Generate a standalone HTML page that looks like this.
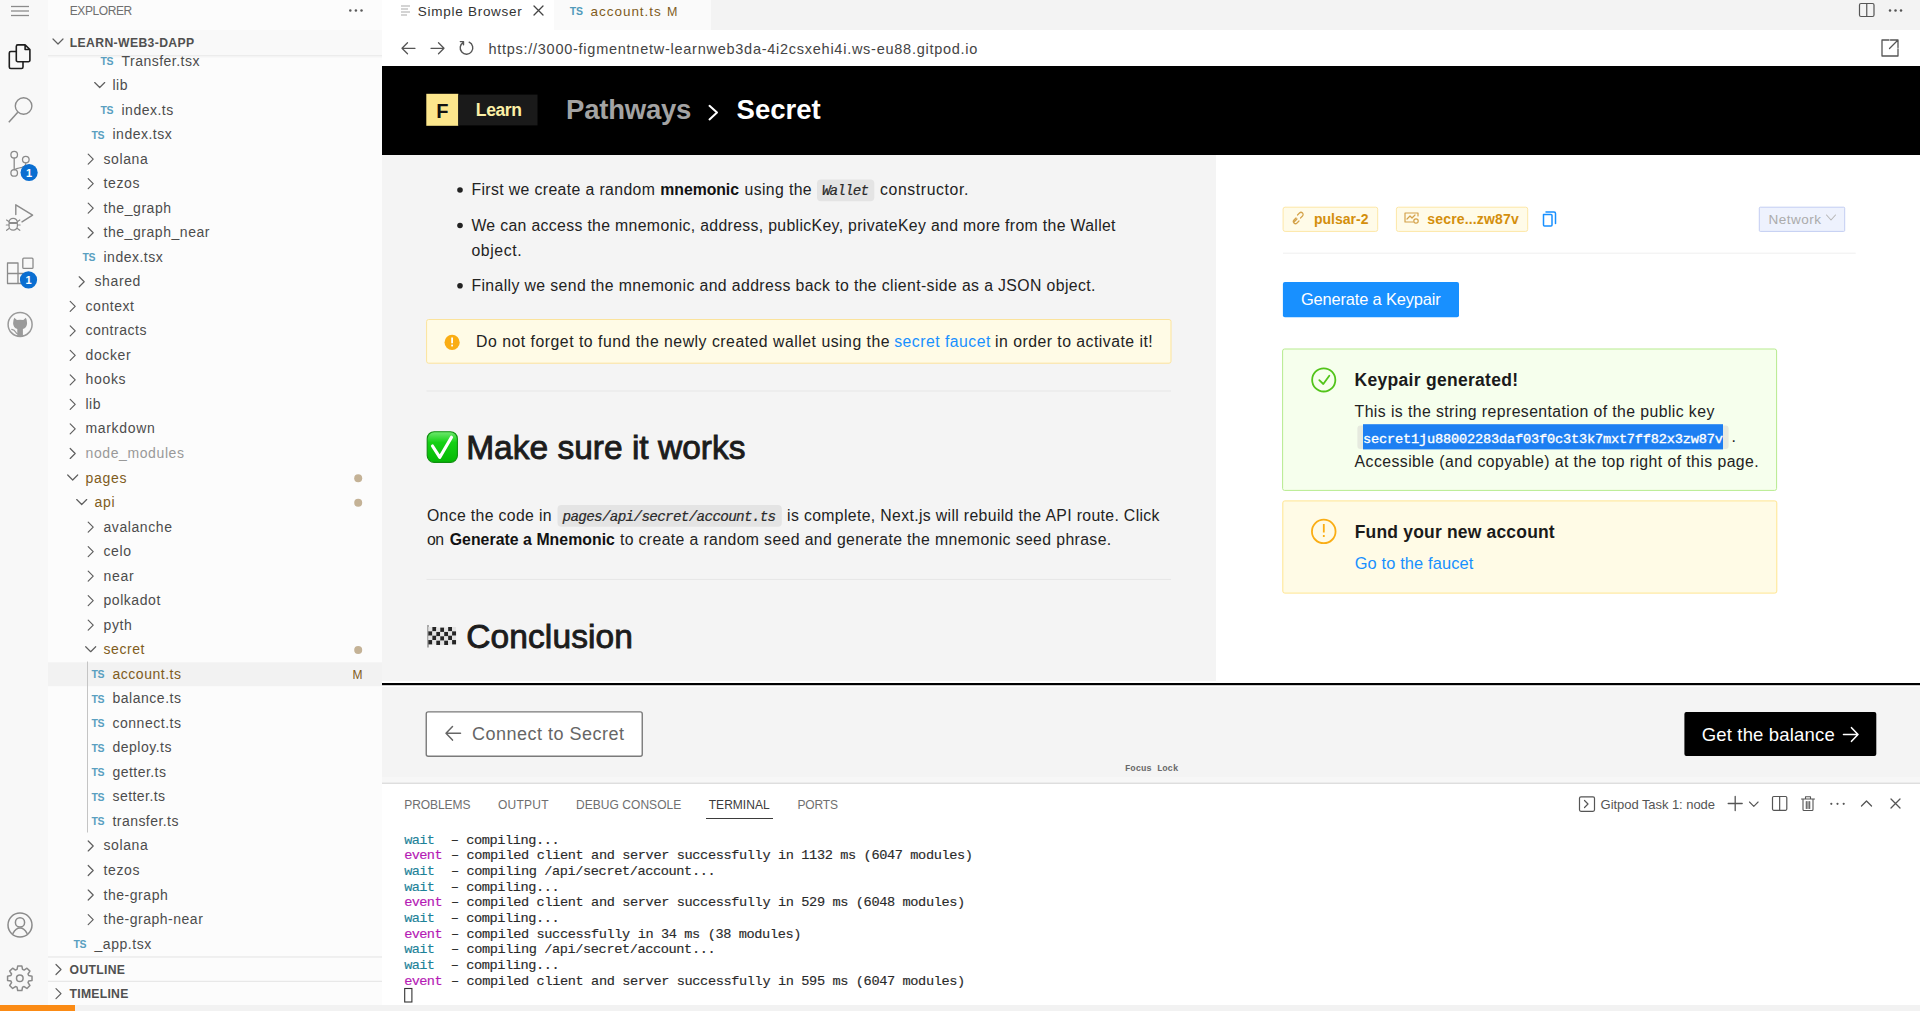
<!DOCTYPE html>
<html><head><meta charset="utf-8"><title>Simple Browser</title>
<style>
html,body{margin:0;padding:0;background:#fff;overflow:hidden;}
body{width:1920px;height:1011px;position:relative;font-family:"Liberation Sans",sans-serif;}
svg{position:absolute;left:0;top:0;display:block;}
text{white-space:pre;}
</style></head><body>
<svg width="1920" height="1011" viewBox="0 0 1920 1011">
<rect x="0.00" y="0.00" width="48.00" height="1005.00" fill="#f8f8f8"/>
<rect x="48.00" y="0.00" width="334.00" height="1005.00" fill="#fcfcfc"/>
<rect x="382.00" y="0.00" width="1538.00" height="30.00" fill="#f3f3f3"/>
<rect x="382.00" y="0.00" width="172.00" height="30.00" fill="#ffffff"/>
<rect x="554.00" y="0.00" width="157.00" height="30.00" fill="#fafafa"/>
<rect x="382.00" y="30.00" width="1538.00" height="36.00" fill="#ffffff"/>
<rect x="382.00" y="66.00" width="1538.00" height="89.00" fill="#000000"/>
<rect x="382.00" y="155.00" width="834.00" height="526.00" fill="#f4f4f4"/>
<rect x="1216.00" y="155.00" width="704.00" height="526.00" fill="#ffffff"/>
<rect x="382.00" y="681.00" width="1538.00" height="6.00" fill="#ffffff"/>
<rect x="382.00" y="683.00" width="1538.00" height="2.20" fill="#000000"/>
<rect x="382.00" y="687.00" width="1538.00" height="90.00" fill="#f4f4f4"/>
<rect x="382.00" y="777.00" width="1538.00" height="5.50" fill="#f7f7f7"/>
<rect x="382.00" y="782.50" width="1538.00" height="1.50" fill="#dedede"/>
<rect x="382.00" y="784.00" width="1538.00" height="221.00" fill="#ffffff"/>
<rect x="0.00" y="1005.00" width="1920.00" height="6.00" fill="#f2f2f2"/>
<rect x="0.00" y="1005.00" width="75.00" height="6.00" fill="#fb8b15"/>
<line x1="11.00" y1="6.50" x2="29.00" y2="6.50" stroke="#8b8b8b" stroke-width="1.3"/>
<line x1="11.00" y1="11.00" x2="29.00" y2="11.00" stroke="#8b8b8b" stroke-width="1.3"/>
<line x1="11.00" y1="15.50" x2="29.00" y2="15.50" stroke="#8b8b8b" stroke-width="1.3"/>
<path d="M17.8 44.9 h7.3 l4.8 4.6 v10.7 a1.5 1.5 0 0 1 -1.5 1.5 h-10.6 a1.5 1.5 0 0 1 -1.5 -1.5 v-13.8 a1.5 1.5 0 0 1 1.5 -1.5 z M25.1 44.9 v4.6 h4.8" stroke="#1e1e1e" stroke-width="1.6" fill="none" stroke-linecap="round" stroke-linejoin="round"/>
<path d="M16.3 51.5 h-5.5 a1.5 1.5 0 0 0 -1.5 1.5 v14 a1.5 1.5 0 0 0 1.5 1.5 h10.7 a1.5 1.5 0 0 0 1.5 -1.5 v-5.3" stroke="#1e1e1e" stroke-width="1.6" fill="none" stroke-linecap="round" stroke-linejoin="round"/>
<circle cx="23.60" cy="106.00" r="8.30" fill="none" stroke="#8b8b8b" stroke-width="1.4"/>
<line x1="17.80" y1="112.20" x2="8.80" y2="122.30" stroke="#8b8b8b" stroke-width="1.5"/>
<circle cx="14.20" cy="154.70" r="3.30" fill="none" stroke="#8b8b8b" stroke-width="1.3"/>
<circle cx="14.20" cy="172.90" r="3.30" fill="none" stroke="#8b8b8b" stroke-width="1.3"/>
<circle cx="25.80" cy="159.60" r="3.30" fill="none" stroke="#8b8b8b" stroke-width="1.3"/>
<line x1="14.20" y1="158.00" x2="14.20" y2="169.60" stroke="#8b8b8b" stroke-width="1.3"/>
<path d="M25.8 162.9 q0 3.5 -4 4.5 q-6 1.2 -7.6 2.5" stroke="#8b8b8b" stroke-width="1.2" fill="none" stroke-linecap="round" stroke-linejoin="round"/>
<circle cx="29.10" cy="172.50" r="8.60" fill="#0a6ed1"/>
<text x="29.10" y="176.50" fill="#ffffff" style="font-family:'Liberation Sans';font-size:11px;font-weight:700" text-anchor="middle">1</text>
<path d="M15.8 214.5 V204.8 L32.6 215.2 L22 221.8" stroke="#8b8b8b" stroke-width="1.4" fill="none" stroke-linecap="round" stroke-linejoin="round"/>
<path d="M9 222.5 a4.2 4.2 0 0 1 8.4 0 z" stroke="#8b8b8b" stroke-width="1.2" fill="none" stroke-linecap="round" stroke-linejoin="round"/>
<path d="M9 223.5 v2.5 a4.2 4.2 0 0 0 8.4 0 v-2.5 z" stroke="#8b8b8b" stroke-width="1.2" fill="none" stroke-linecap="round" stroke-linejoin="round"/>
<path d="M6.6 220 l2.2 1.5 M19.8 220 l-2.2 1.5 M6.3 225 h2.6 M20.1 225 h-2.6 M6.6 230.3 l2.4 -1.8 M19.8 230.3 l-2.4 -1.8" stroke="#8b8b8b" stroke-width="1.2" fill="none" stroke-linecap="round" stroke-linejoin="round"/>
<path d="M7.5 263 h10.5 v10.5 h10 v10 h-20.5 z M7.5 273.5 h10.5 M18 273.5 v10" stroke="#8b8b8b" stroke-width="1.3" fill="none" stroke-linecap="round" stroke-linejoin="round"/>
<rect x="22.80" y="258.20" width="10.20" height="10.20" fill="none" rx="1" stroke="#8b8b8b" stroke-width="1.3"/>
<circle cx="28.50" cy="279.80" r="8.60" fill="#0a6ed1"/>
<text x="28.50" y="283.80" fill="#ffffff" style="font-family:'Liberation Sans';font-size:11px;font-weight:700" text-anchor="middle">1</text>
<circle cx="20.10" cy="324.40" r="12.00" fill="none" stroke="#9a9a9a" stroke-width="1.5"/>
<path d="M14.3 317.8 L16.9 320.1 Q20.1 319.2 23.3 320.1 L25.9 317.8 Q27.2 320.5 27.1 323.2 Q26.9 328 22.9 329 L22.9 336.6 L17.3 336.6 L17.3 329 Q13.3 328 13.1 323.2 Q13 320.5 14.3 317.8 Z" stroke="none" stroke-width="1" fill="#9a9a9a" stroke-linecap="round" stroke-linejoin="round"/>
<path d="M11.8 329.3 Q14.5 329.8 15.6 332 Q16.5 333.8 17.6 333.8" stroke="#9a9a9a" stroke-width="1.3" fill="none" stroke-linecap="round" stroke-linejoin="round"/>
<circle cx="20.00" cy="925.00" r="12.00" fill="none" stroke="#8b8b8b" stroke-width="1.5"/>
<circle cx="20.00" cy="922.40" r="4.60" fill="none" stroke="#8b8b8b" stroke-width="1.5"/>
<path d="M13 933.3 c1.8 -3.4 4 -5.2 7 -5.2 c3 0 5.2 1.8 7 5.2" stroke="#8b8b8b" stroke-width="1.5" fill="none" stroke-linecap="round" stroke-linejoin="round"/>
<path d="M17.70 966.08 L21.90 966.08 L22.55 969.42 L24.14 970.07 L26.96 968.17 L29.93 971.14 L28.03 973.96 L28.68 975.55 L32.02 976.20 L32.02 980.40 L28.68 981.05 L28.03 982.64 L29.93 985.46 L26.96 988.43 L24.14 986.53 L22.55 987.18 L21.90 990.52 L17.70 990.52 L17.05 987.18 L15.46 986.53 L12.64 988.43 L9.67 985.46 L11.57 982.64 L10.92 981.05 L7.58 980.40 L7.58 976.20 L10.92 975.55 L11.57 973.96 L9.67 971.14 L12.64 968.17 L15.46 970.07 L17.05 969.42 Z" stroke="#8b8b8b" stroke-width="1.5" fill="none" stroke-linecap="round" stroke-linejoin="round"/>
<circle cx="19.80" cy="978.30" r="3.30" fill="none" stroke="#8b8b8b" stroke-width="1.5"/>
<text x="69.70" y="15.00" fill="#6f6f6f" style="font-family:'Liberation Sans';font-size:12px;font-weight:400" textLength="62.50" lengthAdjust="spacing">EXPLORER</text>
<circle cx="350.30" cy="10.60" r="1.25" fill="#5a5a5a"/>
<circle cx="355.90" cy="10.60" r="1.25" fill="#5a5a5a"/>
<circle cx="361.50" cy="10.60" r="1.25" fill="#5a5a5a"/>
<rect x="48.00" y="30.00" width="334.00" height="25.00" fill="#f9f9f9"/>
<rect x="48.00" y="55.00" width="334.00" height="1.00" fill="#ececec"/>
<rect x="48.00" y="56.00" width="334.00" height="1.50" fill="#f4f4f4"/>
<path d="M53 39 l5 5 l5 -5" stroke="#5f5f5f" stroke-width="1.2" fill="none" stroke-linecap="round" stroke-linejoin="round"/>
<text x="69.70" y="47.00" fill="#505050" style="font-family:'Liberation Sans';font-size:12.2px;font-weight:700" textLength="124.50" lengthAdjust="spacing">LEARN-WEB3-DAPP</text>
<rect x="48.00" y="662.25" width="334.00" height="24.00" fill="#f2f2f2"/>
<line x1="87.50" y1="661.50" x2="87.50" y2="832.50" stroke="#c4c4c4" stroke-width="1"/>
<text x="100.50" y="65.00" fill="#5a9fc0" style="font-family:'Liberation Sans';font-size:10.5px;font-weight:700" textLength="13.00" lengthAdjust="spacing">TS</text>
<text x="121.50" y="65.50" fill="#4c4c4c" style="font-family:'Liberation Sans';font-size:14px;font-weight:400" textLength="77.88" lengthAdjust="spacing">Transfer.tsx</text>
<path d="M94.70 82.53 l5 5 l5 -5" stroke="#5f5f5f" stroke-width="1.2" fill="none" stroke-linecap="round" stroke-linejoin="round"/>
<text x="112.50" y="90.03" fill="#4c4c4c" style="font-family:'Liberation Sans';font-size:14px;font-weight:400" textLength="15.02" lengthAdjust="spacing">lib</text>
<text x="100.50" y="114.06" fill="#5a9fc0" style="font-family:'Liberation Sans';font-size:10.5px;font-weight:700" textLength="13.00" lengthAdjust="spacing">TS</text>
<text x="121.50" y="114.56" fill="#4c4c4c" style="font-family:'Liberation Sans';font-size:14px;font-weight:400" textLength="51.75" lengthAdjust="spacing">index.ts</text>
<text x="91.50" y="138.59" fill="#5a9fc0" style="font-family:'Liberation Sans';font-size:10.5px;font-weight:700" textLength="13.00" lengthAdjust="spacing">TS</text>
<text x="112.50" y="139.09" fill="#4c4c4c" style="font-family:'Liberation Sans';font-size:14px;font-weight:400" textLength="59.25" lengthAdjust="spacing">index.tsx</text>
<path d="M88.20 154.12 l5 5 l-5 5" stroke="#5f5f5f" stroke-width="1.2" fill="none" stroke-linecap="round" stroke-linejoin="round"/>
<text x="103.50" y="163.62" fill="#4c4c4c" style="font-family:'Liberation Sans';font-size:14px;font-weight:400" textLength="44.25" lengthAdjust="spacing">solana</text>
<path d="M88.20 178.65 l5 5 l-5 5" stroke="#5f5f5f" stroke-width="1.2" fill="none" stroke-linecap="round" stroke-linejoin="round"/>
<text x="103.50" y="188.15" fill="#4c4c4c" style="font-family:'Liberation Sans';font-size:14px;font-weight:400" textLength="35.89" lengthAdjust="spacing">tezos</text>
<path d="M88.20 203.18 l5 5 l-5 5" stroke="#5f5f5f" stroke-width="1.2" fill="none" stroke-linecap="round" stroke-linejoin="round"/>
<text x="103.50" y="212.68" fill="#4c4c4c" style="font-family:'Liberation Sans';font-size:14px;font-weight:400" textLength="67.63" lengthAdjust="spacing">the_graph</text>
<path d="M88.20 227.71 l5 5 l-5 5" stroke="#5f5f5f" stroke-width="1.2" fill="none" stroke-linecap="round" stroke-linejoin="round"/>
<text x="103.50" y="237.21" fill="#4c4c4c" style="font-family:'Liberation Sans';font-size:14px;font-weight:400" textLength="106.03" lengthAdjust="spacing">the_graph_near</text>
<text x="82.50" y="261.24" fill="#5a9fc0" style="font-family:'Liberation Sans';font-size:10.5px;font-weight:700" textLength="13.00" lengthAdjust="spacing">TS</text>
<text x="103.50" y="261.74" fill="#4c4c4c" style="font-family:'Liberation Sans';font-size:14px;font-weight:400" textLength="59.25" lengthAdjust="spacing">index.tsx</text>
<path d="M79.20 276.77 l5 5 l-5 5" stroke="#5f5f5f" stroke-width="1.2" fill="none" stroke-linecap="round" stroke-linejoin="round"/>
<text x="94.50" y="286.27" fill="#4c4c4c" style="font-family:'Liberation Sans';font-size:14px;font-weight:400" textLength="45.91" lengthAdjust="spacing">shared</text>
<path d="M70.20 301.30 l5 5 l-5 5" stroke="#5f5f5f" stroke-width="1.2" fill="none" stroke-linecap="round" stroke-linejoin="round"/>
<text x="85.50" y="310.80" fill="#4c4c4c" style="font-family:'Liberation Sans';font-size:14px;font-weight:400" textLength="48.41" lengthAdjust="spacing">context</text>
<path d="M70.20 325.83 l5 5 l-5 5" stroke="#5f5f5f" stroke-width="1.2" fill="none" stroke-linecap="round" stroke-linejoin="round"/>
<text x="85.50" y="335.33" fill="#4c4c4c" style="font-family:'Liberation Sans';font-size:14px;font-weight:400" textLength="60.92" lengthAdjust="spacing">contracts</text>
<path d="M70.20 350.36 l5 5 l-5 5" stroke="#5f5f5f" stroke-width="1.2" fill="none" stroke-linecap="round" stroke-linejoin="round"/>
<text x="85.50" y="359.86" fill="#4c4c4c" style="font-family:'Liberation Sans';font-size:14px;font-weight:400" textLength="45.07" lengthAdjust="spacing">docker</text>
<path d="M70.20 374.89 l5 5 l-5 5" stroke="#5f5f5f" stroke-width="1.2" fill="none" stroke-linecap="round" stroke-linejoin="round"/>
<text x="85.50" y="384.39" fill="#4c4c4c" style="font-family:'Liberation Sans';font-size:14px;font-weight:400" textLength="40.07" lengthAdjust="spacing">hooks</text>
<path d="M70.20 399.42 l5 5 l-5 5" stroke="#5f5f5f" stroke-width="1.2" fill="none" stroke-linecap="round" stroke-linejoin="round"/>
<text x="85.50" y="408.92" fill="#4c4c4c" style="font-family:'Liberation Sans';font-size:14px;font-weight:400" textLength="15.02" lengthAdjust="spacing">lib</text>
<path d="M70.20 423.95 l5 5 l-5 5" stroke="#5f5f5f" stroke-width="1.2" fill="none" stroke-linecap="round" stroke-linejoin="round"/>
<text x="85.50" y="433.45" fill="#4c4c4c" style="font-family:'Liberation Sans';font-size:14px;font-weight:400" textLength="69.26" lengthAdjust="spacing">markdown</text>
<path d="M70.20 448.48 l5 5 l-5 5" stroke="#5f5f5f" stroke-width="1.2" fill="none" stroke-linecap="round" stroke-linejoin="round"/>
<text x="85.50" y="457.98" fill="#999999" style="font-family:'Liberation Sans';font-size:14px;font-weight:400" textLength="98.51" lengthAdjust="spacing">node_modules</text>
<path d="M67.70 475.01 l5 5 l5 -5" stroke="#5f5f5f" stroke-width="1.2" fill="none" stroke-linecap="round" stroke-linejoin="round"/>
<text x="85.50" y="482.51" fill="#805c1c" style="font-family:'Liberation Sans';font-size:14px;font-weight:400" textLength="40.91" lengthAdjust="spacing">pages</text>
<circle cx="358.20" cy="478.21" r="4.00" fill="#c4b296"/>
<path d="M76.70 499.54 l5 5 l5 -5" stroke="#5f5f5f" stroke-width="1.2" fill="none" stroke-linecap="round" stroke-linejoin="round"/>
<text x="94.50" y="507.04" fill="#805c1c" style="font-family:'Liberation Sans';font-size:14px;font-weight:400" textLength="20.04" lengthAdjust="spacing">api</text>
<circle cx="358.20" cy="502.74" r="4.00" fill="#c4b296"/>
<path d="M88.20 522.07 l5 5 l-5 5" stroke="#5f5f5f" stroke-width="1.2" fill="none" stroke-linecap="round" stroke-linejoin="round"/>
<text x="103.50" y="531.57" fill="#4c4c4c" style="font-family:'Liberation Sans';font-size:14px;font-weight:400" textLength="68.46" lengthAdjust="spacing">avalanche</text>
<path d="M88.20 546.60 l5 5 l-5 5" stroke="#5f5f5f" stroke-width="1.2" fill="none" stroke-linecap="round" stroke-linejoin="round"/>
<text x="103.50" y="556.10" fill="#4c4c4c" style="font-family:'Liberation Sans';font-size:14px;font-weight:400" textLength="27.54" lengthAdjust="spacing">celo</text>
<path d="M88.20 571.13 l5 5 l-5 5" stroke="#5f5f5f" stroke-width="1.2" fill="none" stroke-linecap="round" stroke-linejoin="round"/>
<text x="103.50" y="580.63" fill="#4c4c4c" style="font-family:'Liberation Sans';font-size:14px;font-weight:400" textLength="30.05" lengthAdjust="spacing">near</text>
<path d="M88.20 595.66 l5 5 l-5 5" stroke="#5f5f5f" stroke-width="1.2" fill="none" stroke-linecap="round" stroke-linejoin="round"/>
<text x="103.50" y="605.16" fill="#4c4c4c" style="font-family:'Liberation Sans';font-size:14px;font-weight:400" textLength="56.77" lengthAdjust="spacing">polkadot</text>
<path d="M88.20 620.19 l5 5 l-5 5" stroke="#5f5f5f" stroke-width="1.2" fill="none" stroke-linecap="round" stroke-linejoin="round"/>
<text x="103.50" y="629.69" fill="#4c4c4c" style="font-family:'Liberation Sans';font-size:14px;font-weight:400" textLength="28.38" lengthAdjust="spacing">pyth</text>
<path d="M85.70 646.72 l5 5 l5 -5" stroke="#5f5f5f" stroke-width="1.2" fill="none" stroke-linecap="round" stroke-linejoin="round"/>
<text x="103.50" y="654.22" fill="#805c1c" style="font-family:'Liberation Sans';font-size:14px;font-weight:400" textLength="40.89" lengthAdjust="spacing">secret</text>
<circle cx="358.20" cy="649.92" r="4.00" fill="#c4b296"/>
<text x="91.50" y="678.25" fill="#5a9fc0" style="font-family:'Liberation Sans';font-size:10.5px;font-weight:700" textLength="13.00" lengthAdjust="spacing">TS</text>
<text x="112.50" y="678.75" fill="#805c1c" style="font-family:'Liberation Sans';font-size:14px;font-weight:400" textLength="68.44" lengthAdjust="spacing">account.ts</text>
<text x="352.50" y="678.75" fill="#805c1c" style="font-family:'Liberation Sans';font-size:12px;font-weight:400" textLength="10.50" lengthAdjust="spacing">M</text>
<text x="91.50" y="702.78" fill="#5a9fc0" style="font-family:'Liberation Sans';font-size:10.5px;font-weight:700" textLength="13.00" lengthAdjust="spacing">TS</text>
<text x="112.50" y="703.28" fill="#4c4c4c" style="font-family:'Liberation Sans';font-size:14px;font-weight:400" textLength="68.45" lengthAdjust="spacing">balance.ts</text>
<text x="91.50" y="727.31" fill="#5a9fc0" style="font-family:'Liberation Sans';font-size:10.5px;font-weight:700" textLength="13.00" lengthAdjust="spacing">TS</text>
<text x="112.50" y="727.81" fill="#4c4c4c" style="font-family:'Liberation Sans';font-size:14px;font-weight:400" textLength="68.44" lengthAdjust="spacing">connect.ts</text>
<text x="91.50" y="751.84" fill="#5a9fc0" style="font-family:'Liberation Sans';font-size:10.5px;font-weight:700" textLength="13.00" lengthAdjust="spacing">TS</text>
<text x="112.50" y="752.34" fill="#4c4c4c" style="font-family:'Liberation Sans';font-size:14px;font-weight:400" textLength="58.98" lengthAdjust="spacing">deploy.ts</text>
<text x="91.50" y="776.37" fill="#5a9fc0" style="font-family:'Liberation Sans';font-size:10.5px;font-weight:700" textLength="13.00" lengthAdjust="spacing">TS</text>
<text x="112.50" y="776.87" fill="#4c4c4c" style="font-family:'Liberation Sans';font-size:14px;font-weight:400" textLength="53.42" lengthAdjust="spacing">getter.ts</text>
<text x="91.50" y="800.90" fill="#5a9fc0" style="font-family:'Liberation Sans';font-size:10.5px;font-weight:700" textLength="13.00" lengthAdjust="spacing">TS</text>
<text x="112.50" y="801.40" fill="#4c4c4c" style="font-family:'Liberation Sans';font-size:14px;font-weight:400" textLength="52.57" lengthAdjust="spacing">setter.ts</text>
<text x="91.50" y="825.43" fill="#5a9fc0" style="font-family:'Liberation Sans';font-size:10.5px;font-weight:700" textLength="13.00" lengthAdjust="spacing">TS</text>
<text x="112.50" y="825.93" fill="#4c4c4c" style="font-family:'Liberation Sans';font-size:14px;font-weight:400" textLength="65.93" lengthAdjust="spacing">transfer.ts</text>
<path d="M88.20 840.96 l5 5 l-5 5" stroke="#5f5f5f" stroke-width="1.2" fill="none" stroke-linecap="round" stroke-linejoin="round"/>
<text x="103.50" y="850.46" fill="#4c4c4c" style="font-family:'Liberation Sans';font-size:14px;font-weight:400" textLength="44.25" lengthAdjust="spacing">solana</text>
<path d="M88.20 865.49 l5 5 l-5 5" stroke="#5f5f5f" stroke-width="1.2" fill="none" stroke-linecap="round" stroke-linejoin="round"/>
<text x="103.50" y="874.99" fill="#4c4c4c" style="font-family:'Liberation Sans';font-size:14px;font-weight:400" textLength="35.89" lengthAdjust="spacing">tezos</text>
<path d="M88.20 890.02 l5 5 l-5 5" stroke="#5f5f5f" stroke-width="1.2" fill="none" stroke-linecap="round" stroke-linejoin="round"/>
<text x="103.50" y="899.52" fill="#4c4c4c" style="font-family:'Liberation Sans';font-size:14px;font-weight:400" textLength="64.28" lengthAdjust="spacing">the-graph</text>
<path d="M88.20 914.55 l5 5 l-5 5" stroke="#5f5f5f" stroke-width="1.2" fill="none" stroke-linecap="round" stroke-linejoin="round"/>
<text x="103.50" y="924.05" fill="#4c4c4c" style="font-family:'Liberation Sans';font-size:14px;font-weight:400" textLength="99.33" lengthAdjust="spacing">the-graph-near</text>
<text x="73.50" y="948.08" fill="#5a9fc0" style="font-family:'Liberation Sans';font-size:10.5px;font-weight:700" textLength="13.00" lengthAdjust="spacing">TS</text>
<text x="94.50" y="948.58" fill="#4c4c4c" style="font-family:'Liberation Sans';font-size:14px;font-weight:400" textLength="56.76" lengthAdjust="spacing">_app.tsx</text>
<line x1="48.00" y1="957.00" x2="382.00" y2="957.00" stroke="#e3e3e3" stroke-width="1"/>
<line x1="48.00" y1="981.30" x2="382.00" y2="981.30" stroke="#e3e3e3" stroke-width="1"/>
<path d="M56 964.5 l5 5 l-5 5" stroke="#5f5f5f" stroke-width="1.2" fill="none" stroke-linecap="round" stroke-linejoin="round"/>
<path d="M56 988.7 l5 5 l-5 5" stroke="#5f5f5f" stroke-width="1.2" fill="none" stroke-linecap="round" stroke-linejoin="round"/>
<text x="69.60" y="973.80" fill="#505050" style="font-family:'Liberation Sans';font-size:12.2px;font-weight:700" textLength="55.40" lengthAdjust="spacing">OUTLINE</text>
<text x="69.60" y="998.30" fill="#505050" style="font-family:'Liberation Sans';font-size:12.2px;font-weight:700" textLength="58.70" lengthAdjust="spacing">TIMELINE</text>
<line x1="401.00" y1="6.00" x2="410.00" y2="6.00" stroke="#b8b8b8" stroke-width="1.2"/>
<line x1="401.00" y1="9.00" x2="408.00" y2="9.00" stroke="#b8b8b8" stroke-width="1.2"/>
<line x1="401.00" y1="12.00" x2="410.00" y2="12.00" stroke="#b8b8b8" stroke-width="1.2"/>
<line x1="401.00" y1="15.00" x2="407.00" y2="15.00" stroke="#b8b8b8" stroke-width="1.2"/>
<text x="417.80" y="16.00" fill="#333333" style="font-family:'Liberation Sans';font-size:13.5px;font-weight:400" textLength="104.00" lengthAdjust="spacing">Simple Browser</text>
<path d="M534 6 l9 9 M543 6 l-9 9" stroke="#444444" stroke-width="1.3" fill="none" stroke-linecap="round" stroke-linejoin="round"/>
<text x="569.70" y="14.60" fill="#519aba" style="font-family:'Liberation Sans';font-size:10.5px;font-weight:700">TS</text>
<text x="590.50" y="15.60" fill="#805c1c" style="font-family:'Liberation Sans';font-size:13.5px;font-weight:400" textLength="70.30" lengthAdjust="spacing">account.ts</text>
<text x="667.00" y="15.60" fill="#805c1c" style="font-family:'Liberation Sans';font-size:12.5px;font-weight:400" textLength="11.00" lengthAdjust="spacing">M</text>
<rect x="1859.50" y="3.50" width="14.50" height="13.00" fill="none" rx="1.5" stroke="#555555" stroke-width="1.2"/>
<line x1="1866.75" y1="3.50" x2="1866.75" y2="16.50" stroke="#555555" stroke-width="1.2"/>
<circle cx="1890.00" cy="10.60" r="1.25" fill="#555555"/>
<circle cx="1895.50" cy="10.60" r="1.25" fill="#555555"/>
<circle cx="1901.00" cy="10.60" r="1.25" fill="#555555"/>
<path d="M415 48.3 h-13 M407.5 42.8 l-5.5 5.5 l5.5 5.5" stroke="#555555" stroke-width="1.3" fill="none" stroke-linecap="round" stroke-linejoin="round"/>
<path d="M431 48.3 h13 M438.5 42.8 l5.5 5.5 l-5.5 5.5" stroke="#555555" stroke-width="1.3" fill="none" stroke-linecap="round" stroke-linejoin="round"/>
<path d="M469.16 42.19 A6.3 6.3 0 1 1 463.35 42.44 M460.3 41.6 H463.5 V44.8" stroke="#555555" stroke-width="1.4" fill="none" stroke-linecap="round" stroke-linejoin="round"/>
<text x="488.40" y="53.50" fill="#444444" style="font-family:'Liberation Sans';font-size:14.5px;font-weight:400" textLength="489.00" lengthAdjust="spacing">https://3000-figmentnetw-learnweb3da-4i2csxehi4i.ws-eu88.gitpod.io</text>
<path d="M1889 40 h-7 v16 h16 v-7 M1890.5 40 h7.5 v7.5 M1898 40 l-8.5 8.5" stroke="#555555" stroke-width="1.3" fill="none" stroke-linecap="round" stroke-linejoin="round"/>
<rect x="426.30" y="93.80" width="32.00" height="32.00" fill="#fce68c"/>
<text x="442.30" y="117.50" fill="#111111" style="font-family:'Liberation Sans';font-size:20px;font-weight:700" text-anchor="middle">F</text>
<rect x="458.30" y="94.60" width="79.20" height="30.80" fill="#1a1a1a"/>
<text x="475.80" y="115.80" fill="#fcf0a6" style="font-family:'Liberation Sans';font-size:17.5px;font-weight:700" textLength="46.20" lengthAdjust="spacing">Learn</text>
<text x="566.00" y="119.30" fill="#a3a3a3" style="font-family:'Liberation Sans';font-size:27.5px;font-weight:700" textLength="125.40" lengthAdjust="spacing">Pathways</text>
<path d="M709.5 105.8 l7.5 6.8 l-7.5 6.8" stroke="#ffffff" stroke-width="2" fill="none" stroke-linecap="round" stroke-linejoin="round"/>
<text x="736.60" y="119.30" fill="#ffffff" style="font-family:'Liberation Sans';font-size:27.5px;font-weight:700">Secret</text>
<circle cx="460.00" cy="190.00" r="2.80" fill="#222222"/>
<circle cx="460.00" cy="225.50" r="2.80" fill="#222222"/>
<circle cx="460.00" cy="285.80" r="2.80" fill="#222222"/>
<text x="471.40" y="195.30" fill="#222222" style="font-family:'Liberation Sans';font-size:15.8px;font-weight:400" textLength="183.50" lengthAdjust="spacing">First we create a random</text>
<text x="660.30" y="195.30" fill="#111111" style="font-family:'Liberation Sans';font-size:15.8px;font-weight:700" textLength="78.70" lengthAdjust="spacing">mnemonic</text>
<text x="744.50" y="195.30" fill="#222222" style="font-family:'Liberation Sans';font-size:15.8px;font-weight:400" textLength="67.10" lengthAdjust="spacing">using the</text>
<rect x="817.00" y="179.50" width="57.30" height="21.80" fill="#e4e4e4" rx="4"/>
<text x="821.90" y="195.00" fill="#2a2a2a" style="font-family:'Liberation Mono';font-size:14.3px;font-weight:400;font-style:italic" textLength="47.20" lengthAdjust="spacing" stroke="#2a2a2a" stroke-width="0.2">Wallet</text>
<text x="880.00" y="195.30" fill="#222222" style="font-family:'Liberation Sans';font-size:15.8px;font-weight:400" textLength="88.30" lengthAdjust="spacing">constructor.</text>
<text x="471.40" y="231.00" fill="#222222" style="font-family:'Liberation Sans';font-size:15.8px;font-weight:400" textLength="644.10" lengthAdjust="spacing">We can access the mnemonic, address, publicKey, privateKey and more from the Wallet</text>
<text x="471.40" y="255.60" fill="#222222" style="font-family:'Liberation Sans';font-size:15.8px;font-weight:400" textLength="50.30" lengthAdjust="spacing">object.</text>
<text x="471.40" y="291.20" fill="#222222" style="font-family:'Liberation Sans';font-size:15.8px;font-weight:400" textLength="624.00" lengthAdjust="spacing">Finally we send the mnemonic and address back to the client-side as a JSON object.</text>
<rect x="426.60" y="319.50" width="744.40" height="43.70" fill="#fffbe6" rx="2" stroke="#fbe39b" stroke-width="1"/>
<circle cx="452.10" cy="342.40" r="7.60" fill="#faad14"/>
<rect x="451.20" y="337.50" width="1.80" height="5.80" fill="#ffffff"/>
<rect x="451.20" y="344.60" width="1.80" height="1.80" fill="#ffffff"/>
<text x="476.10" y="346.80" fill="#222222" style="font-family:'Liberation Sans';font-size:15.8px;font-weight:400" textLength="413.50" lengthAdjust="spacing">Do not forget to fund the newly created wallet using the</text>
<text x="894.20" y="346.80" fill="#1890ff" style="font-family:'Liberation Sans';font-size:15.8px;font-weight:400" textLength="96.10" lengthAdjust="spacing">secret faucet</text>
<text x="995.00" y="346.80" fill="#222222" style="font-family:'Liberation Sans';font-size:15.8px;font-weight:400" textLength="157.70" lengthAdjust="spacing">in order to activate it!</text>
<line x1="426.50" y1="391.00" x2="1171.00" y2="391.00" stroke="#e6e6e6" stroke-width="1"/>
<defs><linearGradient id="gck" x1="0" y1="0" x2="0" y2="1"><stop offset="0" stop-color="#6fe86f"/><stop offset="0.35" stop-color="#14d114"/><stop offset="1" stop-color="#05b805"/></linearGradient></defs>
<rect x="427.20" y="431.70" width="30.20" height="30.70" fill="url(#gck)" rx="7" stroke="#0f8f0f" stroke-width="1.1"/>
<path d="M432.5 446 L439.8 457.3 L451.5 437.3" stroke="#ffffff" stroke-width="3.2" fill="none" stroke-linecap="round" stroke-linejoin="round"/>
<text x="466.20" y="459.00" fill="#1c1c1c" style="font-family:'Liberation Sans';font-size:33.5px;font-weight:400" stroke="#1c1c1c" stroke-width="0.9">Make sure it works</text>
<text x="426.90" y="521.10" fill="#222222" style="font-family:'Liberation Sans';font-size:15.8px;font-weight:400" textLength="124.70" lengthAdjust="spacing">Once the code in</text>
<rect x="557.50" y="504.90" width="224.30" height="21.80" fill="#e4e4e4" rx="4"/>
<text x="562.50" y="521.00" fill="#2a2a2a" style="font-family:'Liberation Mono';font-size:14.3px;font-weight:400;font-style:italic" textLength="213.70" lengthAdjust="spacing" stroke="#2a2a2a" stroke-width="0.2">pages/api/secret/account.ts</text>
<text x="787.10" y="521.10" fill="#222222" style="font-family:'Liberation Sans';font-size:15.8px;font-weight:400" textLength="372.40" lengthAdjust="spacing">is complete, Next.js will rebuild the API route. Click</text>
<text x="426.90" y="544.90" fill="#222222" style="font-family:'Liberation Sans';font-size:15.8px;font-weight:400" textLength="17.20" lengthAdjust="spacing">on</text>
<text x="449.70" y="544.90" fill="#111111" style="font-family:'Liberation Sans';font-size:15.8px;font-weight:700" textLength="165.20" lengthAdjust="spacing">Generate a Mnemonic</text>
<text x="619.90" y="544.90" fill="#222222" style="font-family:'Liberation Sans';font-size:15.8px;font-weight:400" textLength="491.30" lengthAdjust="spacing">to create a random seed and generate the mnemonic seed phrase.</text>
<line x1="426.50" y1="579.40" x2="1171.00" y2="579.40" stroke="#e6e6e6" stroke-width="1"/>
<line x1="428.00" y1="625.00" x2="428.00" y2="647.60" stroke="#777777" stroke-width="1.2"/>
<rect x="428.40" y="627.00" width="3.95" height="4.35" fill="#e4e4e4"/>
<rect x="432.35" y="627.00" width="3.95" height="4.35" fill="#262626"/>
<rect x="436.30" y="627.60" width="3.95" height="4.35" fill="#e4e4e4"/>
<rect x="440.25" y="627.60" width="3.95" height="4.35" fill="#262626"/>
<rect x="444.20" y="627.60" width="3.95" height="4.35" fill="#e4e4e4"/>
<rect x="448.15" y="627.00" width="3.95" height="4.35" fill="#262626"/>
<rect x="452.10" y="627.00" width="3.95" height="4.35" fill="#e4e4e4"/>
<rect x="428.40" y="631.35" width="3.95" height="4.35" fill="#262626"/>
<rect x="432.35" y="631.35" width="3.95" height="4.35" fill="#e4e4e4"/>
<rect x="436.30" y="631.95" width="3.95" height="4.35" fill="#262626"/>
<rect x="440.25" y="631.95" width="3.95" height="4.35" fill="#e4e4e4"/>
<rect x="444.20" y="631.95" width="3.95" height="4.35" fill="#262626"/>
<rect x="448.15" y="631.35" width="3.95" height="4.35" fill="#e4e4e4"/>
<rect x="452.10" y="631.35" width="3.95" height="4.35" fill="#262626"/>
<rect x="428.40" y="635.70" width="3.95" height="4.35" fill="#e4e4e4"/>
<rect x="432.35" y="635.70" width="3.95" height="4.35" fill="#262626"/>
<rect x="436.30" y="636.30" width="3.95" height="4.35" fill="#e4e4e4"/>
<rect x="440.25" y="636.30" width="3.95" height="4.35" fill="#262626"/>
<rect x="444.20" y="636.30" width="3.95" height="4.35" fill="#e4e4e4"/>
<rect x="448.15" y="635.70" width="3.95" height="4.35" fill="#262626"/>
<rect x="452.10" y="635.70" width="3.95" height="4.35" fill="#e4e4e4"/>
<rect x="428.40" y="640.05" width="3.95" height="4.35" fill="#262626"/>
<rect x="432.35" y="640.05" width="3.95" height="4.35" fill="#e4e4e4"/>
<rect x="436.30" y="640.65" width="3.95" height="4.35" fill="#262626"/>
<rect x="440.25" y="640.65" width="3.95" height="4.35" fill="#e4e4e4"/>
<rect x="444.20" y="640.65" width="3.95" height="4.35" fill="#262626"/>
<rect x="448.15" y="640.05" width="3.95" height="4.35" fill="#e4e4e4"/>
<rect x="452.10" y="640.05" width="3.95" height="4.35" fill="#262626"/>
<text x="466.20" y="647.60" fill="#1c1c1c" style="font-family:'Liberation Sans';font-size:33.5px;font-weight:400" textLength="166.80" lengthAdjust="spacing" stroke="#1c1c1c" stroke-width="0.9">Conclusion</text>
<rect x="1283.10" y="207.20" width="94.60" height="24.20" fill="#fffbe8" rx="2" stroke="#fde7a6" stroke-width="1"/>
<path d="M1294 222 l3 -3 M1297.5 215 l2 -2 a2 2 0 0 1 3 3 l-2 2 M1299 221 l-2 2 a2 2 0 0 1 -3 -3 l2 -2" stroke="#d4a24a" stroke-width="1.2" fill="none" stroke-linecap="round" stroke-linejoin="round"/>
<text x="1314.00" y="223.90" fill="#d48f0c" style="font-family:'Liberation Sans';font-size:14px;font-weight:700">pulsar-2</text>
<rect x="1396.40" y="207.20" width="131.30" height="24.20" fill="#fffbe8" rx="2" stroke="#fde7a6" stroke-width="1"/>
<path d="M1418 216 v-3 h-13 v9 h8 M1407 219 l3 -3 l2 2 l3 -3" stroke="#d4a24a" stroke-width="1.2" fill="none" stroke-linecap="round" stroke-linejoin="round"/>
<circle cx="1416.00" cy="221.00" r="2.20" fill="none" stroke="#d4a24a" stroke-width="1.2"/>
<text x="1427.30" y="223.90" fill="#d48f0c" style="font-family:'Liberation Sans';font-size:14px;font-weight:700" textLength="91.40" lengthAdjust="spacing">secre...zw87v</text>
<path d="M1546 212 h8 a1.5 1.5 0 0 1 1.5 1.5 v10 M1543.5 214.5 h7.5 a1 1 0 0 1 1 1 v9.5 a1 1 0 0 1 -1 1 h-6.5 a1 1 0 0 1 -1 -1 z" stroke="#1890ff" stroke-width="1.5" fill="none" stroke-linecap="round" stroke-linejoin="round"/>
<rect x="1759.30" y="207.20" width="85.40" height="24.20" fill="#eef2fd" rx="1" stroke="#c3cdf2" stroke-width="1"/>
<text x="1768.60" y="223.60" fill="#ababab" style="font-family:'Liberation Sans';font-size:13.5px;font-weight:400" textLength="52.30" lengthAdjust="spacing">Network</text>
<path d="M1826.5 215 l4.5 5 l4.5 -5" stroke="#b8b8b8" stroke-width="1.1" fill="none" stroke-linecap="round" stroke-linejoin="round"/>
<line x1="1283.00" y1="253.20" x2="1855.70" y2="253.20" stroke="#efefef" stroke-width="1"/>
<rect x="1282.90" y="282.00" width="176.10" height="35.30" fill="#1890ff" rx="2"/>
<text x="1300.90" y="305.20" fill="#ffffff" style="font-family:'Liberation Sans';font-size:16.4px;font-weight:400" textLength="139.80" lengthAdjust="spacing">Generate a Keypair</text>
<rect x="1282.60" y="349.00" width="494.00" height="141.40" fill="#f6ffed" rx="2" stroke="#b7eb8f" stroke-width="1"/>
<circle cx="1323.75" cy="379.90" r="11.60" fill="none" stroke="#52c41a" stroke-width="1.8"/>
<path d="M1319.3 380.2 L1323.3 384 L1329.3 375.8" stroke="#52c41a" stroke-width="1.8" fill="none" stroke-linecap="round" stroke-linejoin="round"/>
<text x="1354.60" y="386.40" fill="#1a1a1a" style="font-family:'Liberation Sans';font-size:17.5px;font-weight:700" textLength="163.40" lengthAdjust="spacing">Keypair generated!</text>
<text x="1354.60" y="416.80" fill="#222222" style="font-family:'Liberation Sans';font-size:15.8px;font-weight:400" textLength="359.70" lengthAdjust="spacing">This is the string representation of the public key</text>
<rect x="1357.40" y="425.50" width="371.20" height="23.50" fill="#e6eadf" rx="3"/>
<rect x="1363.00" y="424.20" width="360.00" height="25.20" fill="#1d7ff2"/>
<text x="1363.00" y="442.50" fill="#ffffff" style="font-family:'Liberation Mono';font-size:13.6px;font-weight:400" textLength="360.00" lengthAdjust="spacing" stroke="#ffffff" stroke-width="0.35">secret1ju88002283daf03f0c3t3k7mxt7ff82x3zw87v</text>
<text x="1731.50" y="442.30" fill="#222222" style="font-family:'Liberation Sans';font-size:15.8px;font-weight:400">.</text>
<text x="1354.60" y="466.60" fill="#222222" style="font-family:'Liberation Sans';font-size:15.8px;font-weight:400" textLength="404.10" lengthAdjust="spacing">Accessible (and copyable) at the top right of this page.</text>
<rect x="1282.80" y="500.90" width="494.00" height="92.20" fill="#fffbe6" rx="2" stroke="#ffe58f" stroke-width="1"/>
<circle cx="1323.75" cy="531.40" r="11.80" fill="none" stroke="#faad14" stroke-width="1.8"/>
<rect x="1322.90" y="524.00" width="1.80" height="8.50" fill="#faad14"/>
<rect x="1322.90" y="535.00" width="1.80" height="2.00" fill="#faad14"/>
<text x="1354.70" y="538.40" fill="#1a1a1a" style="font-family:'Liberation Sans';font-size:17.5px;font-weight:700" textLength="200.00" lengthAdjust="spacing">Fund your new account</text>
<text x="1354.70" y="568.90" fill="#1890ff" style="font-family:'Liberation Sans';font-size:16.4px;font-weight:400" textLength="118.70" lengthAdjust="spacing">Go to the faucet</text>
<rect x="426.25" y="711.90" width="216.00" height="44.30" fill="#ffffff" rx="2" stroke="#7a7a7a" stroke-width="1.4"/>
<path d="M460.5 733.3 h-14 M452.5 726.5 l-6.5 6.8 l6.5 6.8" stroke="#666666" stroke-width="1.5" fill="none" stroke-linecap="round" stroke-linejoin="round"/>
<text x="471.90" y="740.25" fill="#666666" style="font-family:'Liberation Sans';font-size:18px;font-weight:400" textLength="152.10" lengthAdjust="spacing">Connect to Secret</text>
<rect x="1684.40" y="711.90" width="191.90" height="44.20" fill="#000000" rx="2"/>
<text x="1701.70" y="740.75" fill="#ffffff" style="font-family:'Liberation Sans';font-size:18.5px;font-weight:400" textLength="133.00" lengthAdjust="spacing">Get the balance</text>
<path d="M1843.5 734.5 h14.5 M1851.5 727.7 l6.5 6.8 l-6.5 6.8" stroke="#ffffff" stroke-width="1.6" fill="none" stroke-linecap="round" stroke-linejoin="round"/>
<text x="1125.00" y="770.80" fill="#6a6a6a" style="font-family:'Liberation Mono';font-size:9px;font-weight:700" textLength="53.30" lengthAdjust="spacing">Focus Lock</text>
<text x="404.20" y="809.20" fill="#6f6f6f" style="font-family:'Liberation Sans';font-size:12px;font-weight:400" textLength="66.20" lengthAdjust="spacing">PROBLEMS</text>
<text x="497.90" y="809.20" fill="#6f6f6f" style="font-family:'Liberation Sans';font-size:12px;font-weight:400" textLength="50.60" lengthAdjust="spacing">OUTPUT</text>
<text x="576.00" y="809.20" fill="#6f6f6f" style="font-family:'Liberation Sans';font-size:12px;font-weight:400" textLength="105.30" lengthAdjust="spacing">DEBUG CONSOLE</text>
<text x="708.70" y="809.20" fill="#3b3b3b" style="font-family:'Liberation Sans';font-size:12px;font-weight:400" textLength="61.00" lengthAdjust="spacing">TERMINAL</text>
<text x="797.50" y="809.20" fill="#6f6f6f" style="font-family:'Liberation Sans';font-size:12px;font-weight:400" textLength="40.40" lengthAdjust="spacing">PORTS</text>
<line x1="706.00" y1="818.50" x2="773.00" y2="818.50" stroke="#3b3b3b" stroke-width="1.2"/>
<rect x="1579.50" y="796.80" width="15.00" height="14.50" fill="none" rx="1.5" stroke="#555555" stroke-width="1.2"/>
<path d="M1584.5 800.5 l3.5 3.5 l-3.5 3.5" stroke="#555555" stroke-width="1.2" fill="none" stroke-linecap="round" stroke-linejoin="round"/>
<text x="1600.60" y="808.60" fill="#555555" style="font-family:'Liberation Sans';font-size:13px;font-weight:400" textLength="114.40" lengthAdjust="spacing">Gitpod Task 1: node</text>
<path d="M1735.2 796.5 v14 M1728.2 803.5 h14" stroke="#555555" stroke-width="1.3" fill="none" stroke-linecap="round" stroke-linejoin="round"/>
<path d="M1749.5 802 l4.3 4.3 l4.3 -4.3" stroke="#555555" stroke-width="1.1" fill="none" stroke-linecap="round" stroke-linejoin="round"/>
<rect x="1772.50" y="796.50" width="14.30" height="13.80" fill="none" rx="1.2" stroke="#555555" stroke-width="1.2"/>
<line x1="1779.65" y1="796.50" x2="1779.65" y2="810.30" stroke="#555555" stroke-width="1.2"/>
<path d="M1801.5 799 h13 M1805.5 799 v-2.3 h5 v2.3 M1803 799 v10.5 a1 1 0 0 0 1 1 h8 a1 1 0 0 0 1 -1 v-10.5 M1806.3 801.5 v7 M1808 801.5 v7 M1809.7 801.5 v7" stroke="#555555" stroke-width="1.1" fill="none" stroke-linecap="round" stroke-linejoin="round"/>
<circle cx="1831.30" cy="803.80" r="1.10" fill="#555555"/>
<circle cx="1837.50" cy="803.80" r="1.10" fill="#555555"/>
<circle cx="1843.70" cy="803.80" r="1.10" fill="#555555"/>
<path d="M1861.5 806 l5 -5 l5 5" stroke="#555555" stroke-width="1.3" fill="none" stroke-linecap="round" stroke-linejoin="round"/>
<path d="M1891 799 l9 9 M1900 799 l-9 9" stroke="#555555" stroke-width="1.3" fill="none" stroke-linecap="round" stroke-linejoin="round"/>
<text x="404.20" y="843.70" fill="#1d8298" style="font-family:'Liberation Mono';font-size:13.6px;font-weight:400" textLength="30.60" lengthAdjust="spacing" stroke="#1d8298" stroke-width="0.15">wait</text>
<text x="435.40" y="843.70" fill="#2a2a2a" style="font-family:'Liberation Mono';font-size:13.6px;font-weight:400" textLength="124.20" lengthAdjust="spacing" stroke="#2a2a2a" stroke-width="0.15">  – compiling...</text>
<text x="404.20" y="859.38" fill="#b51ab5" style="font-family:'Liberation Mono';font-size:13.6px;font-weight:400" textLength="38.40" lengthAdjust="spacing" stroke="#b51ab5" stroke-width="0.15">event</text>
<text x="443.20" y="859.38" fill="#2a2a2a" style="font-family:'Liberation Mono';font-size:13.6px;font-weight:400" textLength="529.80" lengthAdjust="spacing" stroke="#2a2a2a" stroke-width="0.15"> – compiled client and server successfully in 1132 ms (6047 modules)</text>
<text x="404.20" y="875.06" fill="#1d8298" style="font-family:'Liberation Mono';font-size:13.6px;font-weight:400" textLength="30.60" lengthAdjust="spacing" stroke="#1d8298" stroke-width="0.15">wait</text>
<text x="435.40" y="875.06" fill="#2a2a2a" style="font-family:'Liberation Mono';font-size:13.6px;font-weight:400" textLength="280.20" lengthAdjust="spacing" stroke="#2a2a2a" stroke-width="0.15">  – compiling /api/secret/account...</text>
<text x="404.20" y="890.74" fill="#1d8298" style="font-family:'Liberation Mono';font-size:13.6px;font-weight:400" textLength="30.60" lengthAdjust="spacing" stroke="#1d8298" stroke-width="0.15">wait</text>
<text x="435.40" y="890.74" fill="#2a2a2a" style="font-family:'Liberation Mono';font-size:13.6px;font-weight:400" textLength="124.20" lengthAdjust="spacing" stroke="#2a2a2a" stroke-width="0.15">  – compiling...</text>
<text x="404.20" y="906.42" fill="#b51ab5" style="font-family:'Liberation Mono';font-size:13.6px;font-weight:400" textLength="38.40" lengthAdjust="spacing" stroke="#b51ab5" stroke-width="0.15">event</text>
<text x="443.20" y="906.42" fill="#2a2a2a" style="font-family:'Liberation Mono';font-size:13.6px;font-weight:400" textLength="522.00" lengthAdjust="spacing" stroke="#2a2a2a" stroke-width="0.15"> – compiled client and server successfully in 529 ms (6048 modules)</text>
<text x="404.20" y="922.10" fill="#1d8298" style="font-family:'Liberation Mono';font-size:13.6px;font-weight:400" textLength="30.60" lengthAdjust="spacing" stroke="#1d8298" stroke-width="0.15">wait</text>
<text x="435.40" y="922.10" fill="#2a2a2a" style="font-family:'Liberation Mono';font-size:13.6px;font-weight:400" textLength="124.20" lengthAdjust="spacing" stroke="#2a2a2a" stroke-width="0.15">  – compiling...</text>
<text x="404.20" y="937.78" fill="#b51ab5" style="font-family:'Liberation Mono';font-size:13.6px;font-weight:400" textLength="38.40" lengthAdjust="spacing" stroke="#b51ab5" stroke-width="0.15">event</text>
<text x="443.20" y="937.78" fill="#2a2a2a" style="font-family:'Liberation Mono';font-size:13.6px;font-weight:400" textLength="358.20" lengthAdjust="spacing" stroke="#2a2a2a" stroke-width="0.15"> – compiled successfully in 34 ms (38 modules)</text>
<text x="404.20" y="953.46" fill="#1d8298" style="font-family:'Liberation Mono';font-size:13.6px;font-weight:400" textLength="30.60" lengthAdjust="spacing" stroke="#1d8298" stroke-width="0.15">wait</text>
<text x="435.40" y="953.46" fill="#2a2a2a" style="font-family:'Liberation Mono';font-size:13.6px;font-weight:400" textLength="280.20" lengthAdjust="spacing" stroke="#2a2a2a" stroke-width="0.15">  – compiling /api/secret/account...</text>
<text x="404.20" y="969.14" fill="#1d8298" style="font-family:'Liberation Mono';font-size:13.6px;font-weight:400" textLength="30.60" lengthAdjust="spacing" stroke="#1d8298" stroke-width="0.15">wait</text>
<text x="435.40" y="969.14" fill="#2a2a2a" style="font-family:'Liberation Mono';font-size:13.6px;font-weight:400" textLength="124.20" lengthAdjust="spacing" stroke="#2a2a2a" stroke-width="0.15">  – compiling...</text>
<text x="404.20" y="984.82" fill="#b51ab5" style="font-family:'Liberation Mono';font-size:13.6px;font-weight:400" textLength="38.40" lengthAdjust="spacing" stroke="#b51ab5" stroke-width="0.15">event</text>
<text x="443.20" y="984.82" fill="#2a2a2a" style="font-family:'Liberation Mono';font-size:13.6px;font-weight:400" textLength="522.00" lengthAdjust="spacing" stroke="#2a2a2a" stroke-width="0.15"> – compiled client and server successfully in 595 ms (6047 modules)</text>
<rect x="404.70" y="988.50" width="7.20" height="13.50" fill="none" stroke="#333333" stroke-width="1.1"/>
</svg>
</body></html>
